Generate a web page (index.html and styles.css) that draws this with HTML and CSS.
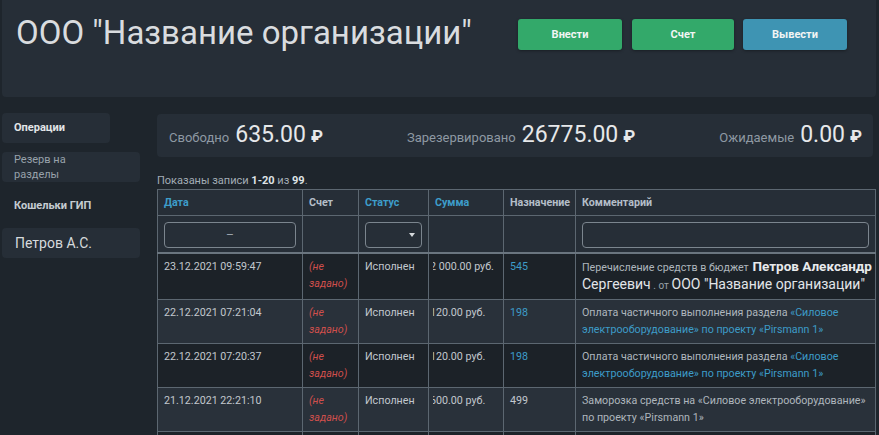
FILE: index.html
```html
<!DOCTYPE html>
<html lang="ru">
<head>
<meta charset="utf-8">
<title>Операции</title>
<link rel="stylesheet" href="styles.css">
</head>
<body>
<header class="topbar">
  <h1 class="org-title">ООО "Название организации"</h1>
  <div class="actions">
    <button class="btn btn-green btn-in">Внести</button>
    <button class="btn btn-green btn-acc">Счет</button>
    <button class="btn btn-blue btn-out">Вывести</button>
  </div>
</header>
<div class="layout">
  <nav class="sidebar">
    <a class="side-item side-active">Операции</a>
    <a class="side-item side-reserve">Резерв на<br>разделы</a>
    <div class="side-title">Кошельки ГИП</div>
    <a class="side-item side-person">Петров А.С.</a>
  </nav>
  <main class="content">
    <div class="balance">
      <div class="bal-item"><span class="bal-label">Свободно</span><span class="bal-num">635.00</span><span class="rub">₽</span></div>
      <div class="bal-item"><span class="bal-label">Зарезервировано</span><span class="bal-num">26775.00</span><span class="rub">₽</span></div>
      <div class="bal-item"><span class="bal-label">Ожидаемые</span><span class="bal-num">0.00</span><span class="rub">₽</span></div>
    </div>
    <div class="summary">Показаны записи <b>1-20</b> из <b>99</b>.</div>
    <table class="grid">
      <colgroup>
        <col class="c-date"><col class="c-acc"><col class="c-status"><col class="c-sum"><col class="c-dest"><col class="c-comm">
      </colgroup>
      <thead>
        <tr class="head-row">
          <th class="sort">Дата</th>
          <th>Счет</th>
          <th class="sort">Статус</th>
          <th class="sort">Сумма</th>
          <th>Назначение</th>
          <th>Комментарий</th>
        </tr>
        <tr class="filter-row">
          <td><div class="f-input f-date">–</div></td>
          <td></td>
          <td><div class="f-input f-select"><span class="caret"></span></div></td>
          <td></td>
          <td></td>
          <td><div class="f-input"></div></td>
        </tr>
      </thead>
      <tbody>
        <tr>
          <td>23.12.2021 09:59:47</td>
          <td class="unset">(не задано)</td>
          <td>Исполнен</td>
          <td class="amount"><div class="amount-clip"><span>2 000.00 руб.</span></div></td>
          <td><a class="link">545</a></td>
          <td class="comm"><span class="nowrap">Перечисление средств в бюджет <b class="big-name">Петров Александр</b></span> <span class="big">Сергеевич</span> <span class="small">. от</span> <span class="big">ООО "Название организации"</span></td>
        </tr>
        <tr>
          <td>22.12.2021 07:21:04</td>
          <td class="unset">(не задано)</td>
          <td>Исполнен</td>
          <td class="amount"><div class="amount-clip"><span>120.00 руб.</span></div></td>
          <td><a class="link">198</a></td>
          <td class="comm">Оплата частичного выполнения раздела <a class="link">«Силовое электрооборудование» по проекту «Pirsmann 1»</a></td>
        </tr>
        <tr>
          <td>22.12.2021 07:20:37</td>
          <td class="unset">(не задано)</td>
          <td>Исполнен</td>
          <td class="amount"><div class="amount-clip"><span>120.00 руб.</span></div></td>
          <td><a class="link">198</a></td>
          <td class="comm">Оплата частичного выполнения раздела <a class="link">«Силовое электрооборудование» по проекту «Pirsmann 1»</a></td>
        </tr>
        <tr>
          <td>21.12.2021 22:21:10</td>
          <td class="unset">(не задано)</td>
          <td>Исполнен</td>
          <td class="amount"><div class="amount-clip"><span>600.00 руб.</span></div></td>
          <td>499</td>
          <td class="comm">Заморозка средств на «Силовое электрооборудование» по проекту «Pirsmann 1»</td>
        </tr>
        <tr>
          <td>21.12.2021 22:20:05</td>
          <td class="unset">(не задано)</td>
          <td>Исполнен</td>
          <td class="amount"><div class="amount-clip"><span>600.00 руб.</span></div></td>
          <td>499</td>
          <td class="comm">Заморозка средств</td>
        </tr>
      </tbody>
    </table>
  </main>
</div>
</body>
</html>
```
FILE: styles.css
```css
* { box-sizing: border-box; }

body {
  margin: 0;
  background: #1e252c;
  font-family: Roboto, "Liberation Sans", sans-serif;
  font-size: 11px;
  color: #c2c8ce;
  overflow: hidden;
}

.topbar {
  display: flex;
  justify-content: space-between;
  align-items: flex-start;
  height: 97px;
  margin: 0 3px 0 2px;
  padding: 13px 29px 0 14px;
  background: #262e37;
  border-radius: 0 0 4px 4px;
}

.org-title {
  margin: 0;
  font-size: 33px;
  line-height: 40px;
  font-weight: 400;
  color: #d9dcdf;
  white-space: nowrap;
}

.actions {
  display: flex;
  margin-top: 6px;
}

.btn {
  height: 31px;
  border: none;
  border-radius: 3px;
  font-family: Roboto, "Liberation Sans", sans-serif;
  font-size: 11px;
  font-weight: 700;
  color: #f2f5f4;
  box-shadow: 0 1px 3px rgba(0, 0, 0, 0.35);
  padding: 0;
}

.btn-green { background: #33a96a; }
.btn-blue { background: #3e94b3; }

.btn-in { width: 104px; }
.btn-acc { width: 102px; margin-left: 10px; }
.btn-out { width: 104px; margin-left: 9px; }

.layout {
  display: flex;
  margin-top: 16px;
  padding-left: 2px;
}

.sidebar {
  width: 138px;
  flex: none;
}

.side-item {
  display: block;
  background: #262e37;
  border-radius: 4px;
  padding-left: 12px;
}

.side-active {
  width: 108px;
  height: 30px;
  line-height: 30px;
  font-weight: 700;
  color: #e2e5e8;
}

.side-reserve {
  margin-top: 9px;
  height: 30px;
  line-height: 15px;
  color: #98a2ab;
}

.side-title {
  margin-top: 16px;
  line-height: 16px;
  padding-left: 12px;
  font-weight: 700;
  color: #c5ccd2;
}

.side-person {
  margin-top: 14px;
  height: 30px;
  line-height: 30px;
  padding-left: 13px;
  font-size: 14px;
  color: #d6dadd;
}

.content {
  margin-left: 17px;
  width: 718px;
  flex: none;
}

.balance {
  display: flex;
  justify-content: space-between;
  align-items: flex-start;
  width: 716px;
  height: 43px;
  margin-top: 1px;
  padding: 9px 11px 0 12px;
  background: #262e37;
  border-radius: 4px;
}

.bal-item {
  line-height: 24px;
  white-space: nowrap;
}

.bal-label {
  font-size: 13px;
  color: #8e99a3;
  margin-right: 6px;
}

.bal-num {
  font-size: 23px;
  color: #e6e8ea;
}

.rub {
  font-size: 17px;
  font-weight: 700;
  color: #e6e8ea;
  margin-left: 5px;
}

.summary {
  margin-top: 16px;
  line-height: 16px;
  color: #a3adb6;
}

.summary b { color: #dfe3e6; }

.grid {
  width: 718px;
  border-collapse: collapse;
  table-layout: fixed;
  border: 1px solid #5c6771;
  font-size: 10.7px;
}

.c-date { width: 145px; }
.c-acc { width: 56px; }
.c-status { width: 70px; }
.c-sum { width: 75px; }
.c-dest { width: 72px; }
.c-comm { width: 300px; }

.grid th,
.grid td {
  border: 1px solid #5c6771;
  text-align: left;
  vertical-align: top;
}

.grid th {
  padding: 5px 6px;
  line-height: 15px;
  font-weight: 700;
  color: #b4bec8;
  background: #262e37;
}

.grid th.sort { color: #3d9dca; }

.filter-row td {
  padding: 6px 6px 4px;
  background: #262e37;
  border-bottom: 2px solid #6a757f;
}

.f-input {
  height: 26px;
  border: 1px solid #7b858e;
  border-radius: 4px;
}

.f-date {
  display: flex;
  align-items: center;
  justify-content: center;
  color: #9aa3ab;
  font-size: 12px;
}

.f-select {
  display: flex;
  align-items: center;
  justify-content: flex-end;
  padding-right: 6px;
}

.caret {
  width: 0;
  height: 0;
  border-left: 3.5px solid transparent;
  border-right: 3.5px solid transparent;
  border-top: 4px solid #d5d9dc;
}

.grid tbody td {
  padding: 4px 6px 5px;
  line-height: 17px;
  color: #c2c8ce;
}

.grid tbody tr:nth-child(odd) td { background: #1c2228; }
.grid tbody tr:nth-child(even) td { background: #29313a; }

.grid td.unset {
  font-style: italic;
  color: #cf4f4c;
}

.grid td.amount { padding-left: 4px; padding-right: 0; }

.amount-clip {
  overflow: hidden;
  white-space: nowrap;
}

.amount-clip span { margin-left: -3px; }

.link { color: #3d9cc8; }

.grid td.comm {
  color: #aeb6bd;
  padding-right: 4px;
}

.nowrap { white-space: nowrap; }

.big-name {
  font-size: 13.5px;
  font-weight: 700;
  color: #e8eaec;
  margin-left: 1px;
}

.big {
  font-size: 14px;
  color: #e2e5e8;
}

.small {
  font-size: 10px;
  color: #9aa3ab;
}
```
